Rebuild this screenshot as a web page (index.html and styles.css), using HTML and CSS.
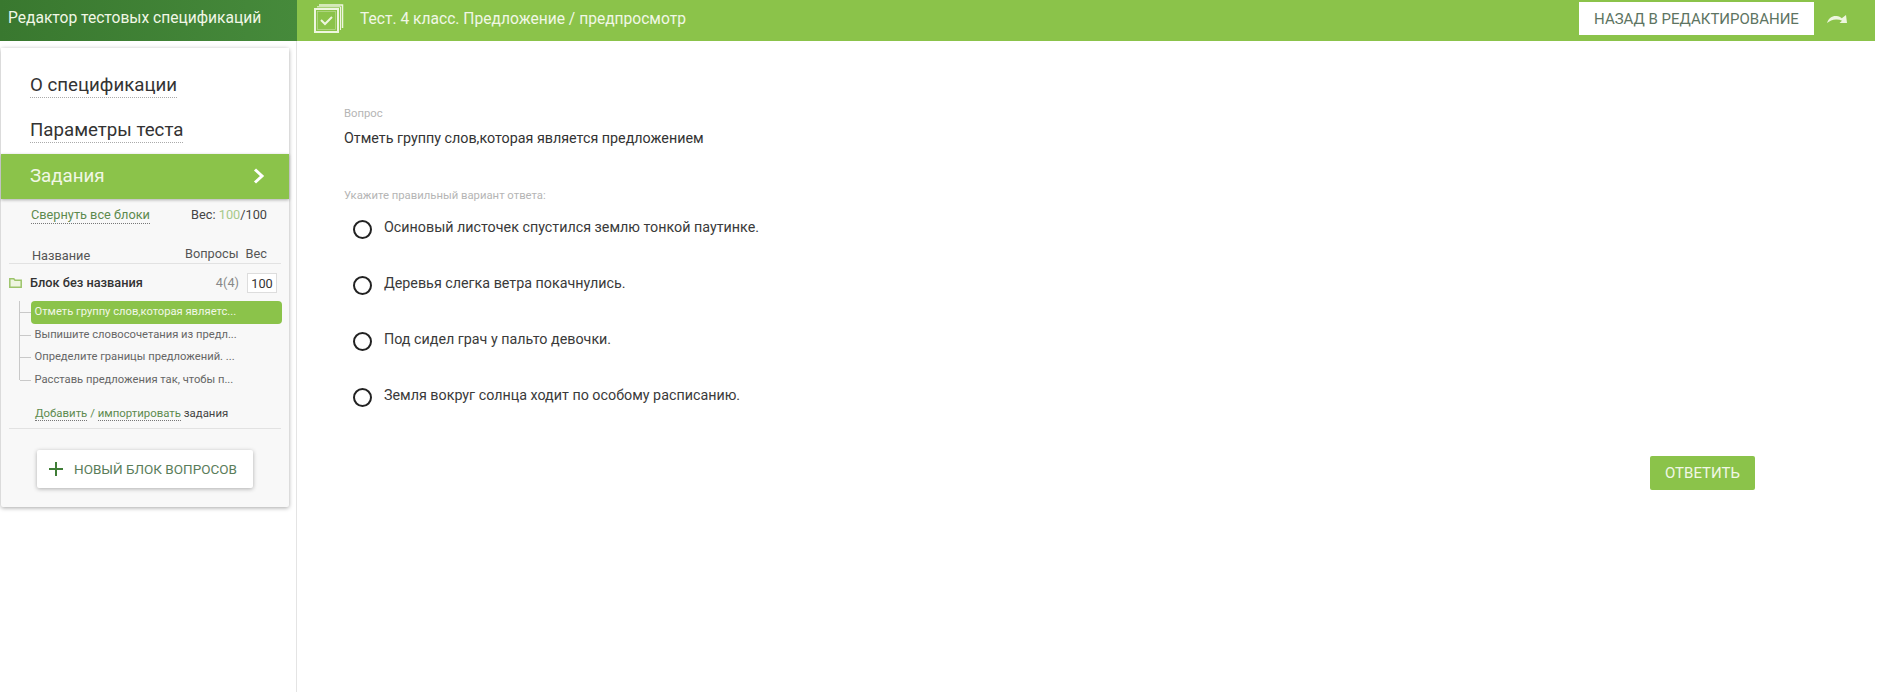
FILE: index.html
```html
<!DOCTYPE html>
<html lang="ru">
<head>
    <meta charset="UTF-8">
    <title>Редактор тестовых спецификаций</title>
    <link rel="stylesheet" href="styles.css">
</head>
<body>
<div class="page">
    <header class="topbar">
        <div class="brand">Редактор тестовых спецификаций</div>
        <div class="topbar-main">
            <svg class="test-icon" width="30" height="30" viewBox="0 0 30 30" fill="none" stroke="#eef6df">
                <path d="M5 1H28.500V24" stroke-width="1.500"/>
                <path d="M3 2.800H26.500V26" stroke-width="1"/>
                <rect x="1" y="5" width="23" height="23" fill="#8bc34a" stroke-width="2"/>
                <rect x="3.500" y="7.500" width="18" height="18" stroke-width="0.7" stroke-opacity="0.5"/>
                <path d="M7 16l4 4 7-7" stroke-width="2"/>
            </svg>
            <div class="test-title">Тест. 4 класс. Предложение / предпросмотр</div>
            <button class="back-btn">Назад в редактирование</button>
            <svg class="redo-icon" width="20" height="10" viewBox="0 0 20 10" fill="#eef6df">
                <path d="M0 8C1.500 3 5.500 .5 9.500 1 12 1.300 13.500 2.300 14.800 3.200L19 0 20 8H12.500L15 5.800C13 4.800 11 4.300 9 4.500 5.500 4.700 2.500 6 0 8Z"/>
            </svg>
        </div>
    </header>

    <div class="layout">
        <aside class="sidebar">
            <div class="panel">
                <nav class="nav">
                    <div class="nav-item"><span>О спецификации</span></div>
                    <div class="nav-item"><span>Параметры теста</span></div>
                    <div class="nav-active">
                        <span>Задания</span>
                        <svg width="12" height="16" viewBox="0 0 12 16" fill="none" stroke="#fff" stroke-width="3"><path d="M2 1.500l7 6.500-7 6.500"/></svg>
                    </div>
                </nav>
                <div class="tasks">
                    <div class="tasks-top">
                        <a class="dotted">Свернуть все блоки</a>
                        <div>Вес: <span class="green-num">100</span>/100</div>
                    </div>
                    <div class="table-head">
                        <div class="col-name">Название</div>
                        <div class="col-q">Вопросы</div>
                        <div class="col-w">Вес</div>
                    </div>
                    <div class="block-row">
                        <svg width="13" height="10" viewBox="0 0 13 10" fill="#eef5e0" stroke="#9cc46a" stroke-width="1.500"><path d="M.8.8h4l1.200 1.500h6.200v6.900H.8z"/></svg>
                        <div class="block-name">Блок без названия</div>
                        <div class="block-count">4(4)</div>
                        <div class="block-weight">100</div>
                    </div>
                    <ul class="tree">
                        <li class="tree-item selected"><div class="tree-text">Отметь группу слов,которая являетс...</div></li>
                        <li class="tree-item"><div class="tree-text">Выпишите словосочетания из предл...</div></li>
                        <li class="tree-item"><div class="tree-text">Определите границы предложений. ...</div></li>
                        <li class="tree-item"><div class="tree-text">Расставь предложения так, чтобы п...</div></li>
                    </ul>
                    <div class="add-line"><a class="dotted">Добавить</a> <span class="green-text">/</span> <a class="dotted">импортировать</a> задания</div>
                    <div class="new-wrap">
                        <button class="new-block">
                            <svg width="14" height="14" viewBox="0 0 14 14" fill="#3f7d36"><path d="M6 0h2v6h6v2H8v6H6V8H0V6h6z"/></svg>
                            Новый блок вопросов
                        </button>
                    </div>
                </div>
            </div>
        </aside>

        <main class="content">
            <div class="label first">Вопрос</div>
            <div class="question">Отметь группу слов,которая является предложением</div>
            <div class="label second">Укажите правильный вариант ответа:</div>
            <div class="options">
                <div class="option"><span class="radio"></span><span>Осиновый листочек спустился землю тонкой паутинке.</span></div>
                <div class="option"><span class="radio"></span><span>Деревья слегка ветра покачнулись.</span></div>
                <div class="option"><span class="radio"></span><span>Под сидел грач у пальто девочки.</span></div>
                <div class="option"><span class="radio"></span><span>Земля вокруг солнца ходит по особому расписанию.</span></div>
            </div>
            <div class="answer-row"><button class="answer-btn">Ответить</button></div>
        </main>
    </div>
</div>
</body>
</html>
```

FILE: styles.css
```css
* {
    box-sizing: border-box;
    margin: 0;
    padding: 0;
}

html, body {
    height: 100%;
    overflow: hidden;
}

body {
    background-color: #fff;
    color: #333;
    font-family: 'Roboto', sans-serif;
}

.page {
    width: 1875px;
    height: 692px;
    display: flex;
    flex-direction: column;
}

.topbar {
    display: flex;
    height: 41px;
    flex-shrink: 0;
    background-color: #8bc34a;
}

.brand {
    width: 297px;
    padding-left: 8px;
    line-height: 37px;
    font-size: 15.6px;
    color: #f1f7e6;
    background: linear-gradient(to right, #39782f, #468a3b);
}

.topbar-main {
    flex: 1;
    display: flex;
    align-items: center;
    padding-left: 17px;
}

.test-icon {
    margin: 0 16px 3px 0;
}

.test-title {
    flex: 1;
    font-size: 15.6px;
    color: #f1f7e6;
    padding-bottom: 4px;
}

.back-btn {
    width: 235px;
    height: 33px;
    margin-bottom: 4px;
    background: #fff;
    border: none;
    color: #5d7462;
    font-family: inherit;
    font-size: 15px;
    text-transform: uppercase;
}

.redo-icon {
    margin: 0 28px 1px 13px;
}

.layout {
    flex: 1;
    display: flex;
}

.sidebar {
    width: 297px;
    border-right: 1px solid #e4e4e4;
    padding: 7px 7px 0 1px;
}

.panel {
    background: #f8f8f8;
    border-radius: 2px;
    box-shadow: 0 1px 4px rgba(0, 0, 0, 0.35);
}

.nav {
    background: #fff;
    padding-top: 16px;
}

.nav-item {
    height: 45px;
    padding: 10px 0 0 29px;
    font-size: 18.7px;
    color: #333;
}

.nav-item span {
    border-bottom: 1px dotted #aaa;
    padding-bottom: 1px;
}

.nav-active {
    height: 45px;
    display: flex;
    align-items: center;
    justify-content: space-between;
    padding: 0 24px 2px 29px;
    font-size: 18.7px;
    color: #f1f7e6;
    background: #8bc34a;
    box-shadow: 0 1px 3px rgba(0, 0, 0, 0.3);
}

.tasks {
    padding: 0 8px 19px;
    font-size: 12.75px;
}

.tasks-top {
    display: flex;
    justify-content: space-between;
    padding: 7px 14px 0 22px;
    line-height: 17px;
    color: #444;
}

.dotted {
    color: #5d8a4e;
    border-bottom: 1px dotted #777;
}

.green-num {
    color: #a5c98a;
}

.table-head {
    display: flex;
    align-items: flex-end;
    height: 40px;
    padding: 0 14px 0 23px;
    border-bottom: 1px solid #e2e2e2;
    color: #555;
    line-height: 15px;
}

.col-name {
    flex: 1;
}

.col-w {
    margin-left: 7px;
    position: relative;
    top: -2px;
}

.col-q {
    position: relative;
    top: -2px;
}

.block-row {
    display: flex;
    align-items: center;
    height: 37px;
    color: #333;
}

.block-name {
    flex: 1;
    margin-left: 8px;
    font-weight: 500;
    color: #333;
}

.block-count {
    color: #888;
    margin-right: 8px;
}

.block-weight {
    width: 30px;
    height: 20px;
    line-height: 19px;
    text-align: center;
    background: #fff;
    border: 1px solid #ddd;
    margin-right: 4px;
}

.tree {
    list-style: none;
    margin: 0 -1px 0 10px;
    border-left: 1px solid #c9c9c9;
    height: 79px;
}

.tree-item {
    height: 22.5px;
    margin-left: 11px;
    position: relative;
    font-size: 11.2px;
    color: #666;
}

.tree-item::before {
    content: "";
    position: absolute;
    left: -11px;
    top: 11px;
    width: 11px;
    border-top: 1px solid #c9c9c9;
}

.tree-text {
    height: 22.5px;
    line-height: 22.5px;
    padding-left: 3.5px;
    white-space: nowrap;
}

.selected .tree-text {
    color: #f1f7e6;
    background: #8bc34a;
    border-radius: 4px;
}

.add-line {
    padding: 0 0 6px 26px;
    margin-top: 24px;
    line-height: 18px;
    font-size: 11.4px;
    color: #444;
    border-bottom: 1px solid #e2e2e2;
}

.green-text {
    color: #5d8a4e;
}

.new-wrap {
    padding: 21px 0 0 28px;
}

.new-block {
    display: flex;
    align-items: center;
    gap: 11px;
    width: 216px;
    height: 38px;
    padding-left: 12px;
    background: #fff;
    border: none;
    border-radius: 2px;
    box-shadow: 0 1px 4px rgba(0, 0, 0, 0.3);
    font-family: inherit;
    font-size: 13.5px;
    color: #5a7d5a;
    text-transform: uppercase;
}

.content {
    flex: 1;
    padding: 66px 0 0 47px;
}

.label {
    font-size: 11.3px;
    color: #b5b5b5;
    line-height: 14px;
}

.question {
    margin-top: 7px;
    font-size: 14.3px;
    line-height: 20px;
    color: #333;
}

.label.second {
    margin-top: 41px;
}

.options {
    margin-top: 14px;
    padding-left: 9px;
}

.option {
    height: 56px;
    display: flex;
    gap: 12px;
    font-size: 14.3px;
    line-height: 20px;
    color: #3a3a3a;
}

.radio {
    width: 19px;
    height: 19px;
    margin-top: 3px;
    border: 2px solid #222;
    border-radius: 50%;
}

.answer-row {
    display: flex;
    justify-content: flex-end;
    padding-right: 120px;
    margin-top: 15px;
}

.answer-btn {
    width: 105px;
    height: 34px;
    background: #8bc34a;
    border: none;
    border-radius: 2px;
    color: #f1f7e6;
    font-family: inherit;
    font-size: 15px;
    text-transform: uppercase;
}
```
